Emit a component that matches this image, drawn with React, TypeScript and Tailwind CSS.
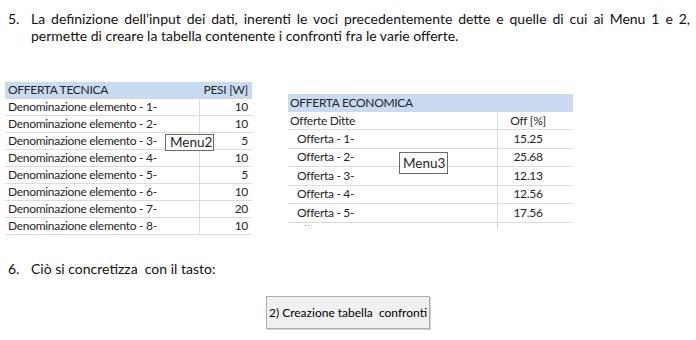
import React from 'react';

const tecnica = [
  ['Denominazione elemento - 1-', '10'],
  ['Denominazione elemento - 2-', '10'],
  ['Denominazione elemento - 3-', '5'],
  ['Denominazione elemento - 4-', '10'],
  ['Denominazione elemento - 5-', '5'],
  ['Denominazione elemento - 6-', '10'],
  ['Denominazione elemento - 7-', '20'],
  ['Denominazione elemento - 8-', '10'],
];

const economica = [
  ['Offerta - 1-', '15.25'],
  ['Offerta - 2-', '25.68'],
  ['Offerta - 3-', '12.13'],
  ['Offerta - 4-', '12.56'],
  ['Offerta - 5-', '17.56'],
];

const App: React.FC = () => {
  return (
    <div className="w-[696px] h-[340px] bg-white text-[#111] font-['Lato','Liberation_Sans',sans-serif] overflow-hidden">
      {/* punto 5 */}
      <div className="flex pt-[10px] text-[14px] leading-[17px]">
        <div className="w-[31px] pl-[8px] shrink-0">5.</div>
        <div className="w-[659px]">
          <p className="text-justify [text-align-last:justify]">
            La definizione dell’input dei dati, inerenti le voci precedentemente dette e quelle di cui ai Menu 1 e 2,
          </p>
          <p>permette di creare la tabella contenente i confronti fra le varie offerte.</p>
        </div>
      </div>

      {/* tabelle */}
      <div className="flex items-start mt-[38px] text-[12px] tracking-[-0.3px] text-[#262626] whitespace-nowrap">
        <div className="relative ml-[5px] w-[247px]">
          <div className="flex h-[17px] items-center bg-[#c9dbf0] border-b border-[#d6d6d6]">
            <div className="w-[195px] pl-[3px]">OFFERTA TECNICA</div>
            <div className="flex-1 text-right pr-[4px]">PESI [W]</div>
          </div>
          {tecnica.map(([name, val], i) => (
            <div key={i} className="flex h-[17px] items-center border-b border-[#dcdcdc]">
              <div className="w-[195px] pl-[3px] border-r border-[#dcdcdc] h-full flex items-center">{name}</div>
              <div className="flex-1 text-right pr-[4px]">{val}</div>
            </div>
          ))}
          <div className="absolute left-[160px] top-[52px] h-[17px] w-[49px] border border-[#6b6b6b] bg-white text-[13.5px] tracking-normal leading-[15px] px-[4px]">
            Menu2
          </div>
        </div>

        <div className="relative ml-[36px] mt-[12px] w-[285px]">
          <div className="h-[18px] flex items-center bg-[#c9dbf0] pl-[2px]">OFFERTA ECONOMICA</div>
          <div className="flex h-[18px] items-center border-b border-[#dcdcdc]">
            <div className="w-[210px] pl-[2px] border-r border-[#dcdcdc] h-full flex items-center">Offerte Ditte</div>
            <div className="flex-1 text-center pr-[15px]">Off [%]</div>
          </div>
          {economica.map(([name, val], i) => (
            <div key={i} className="flex h-[18.5px] items-center border-b border-[#dcdcdc]">
              <div className="w-[210px] pl-[9px] border-r border-[#dcdcdc] h-full flex items-center">{name}</div>
              <div className="flex-1 text-center pr-[15px]">{val}</div>
            </div>
          ))}
          <div className="flex h-[6px]">
            <div className="w-[210px] pl-[17px] pt-[2px] border-r border-[#dcdcdc] flex gap-[2px]">
              <span className="w-[1px] h-[1px] bg-[#999]" />
              <span className="w-[1px] h-[1px] bg-[#999]" />
            </div>
          </div>
          <div className="absolute left-[111px] top-[58px] h-[22px] w-[49px] border border-[#6b6b6b] bg-white text-[13.5px] tracking-normal leading-[20px] px-[3px]">
            Menu3
          </div>
        </div>
      </div>

      {/* punto 6 */}
      <div className="flex mt-[25px] text-[14px] leading-[17px]">
        <div className="w-[31px] pl-[8px] shrink-0">6.</div>
        <p>Ciò si concretizza&nbsp; con il tasto:</p>
      </div>

      <div className="mt-[19px] ml-[266px]">
        <button className="w-[164px] h-[33px] bg-[#f0f0f0] border border-[#adadad] shadow-[1px_1px_0_#d0d0d0] text-[12px] text-black">
          2) Creazione tabella&nbsp; confronti
        </button>
      </div>
    </div>
  );
};

export default App;
